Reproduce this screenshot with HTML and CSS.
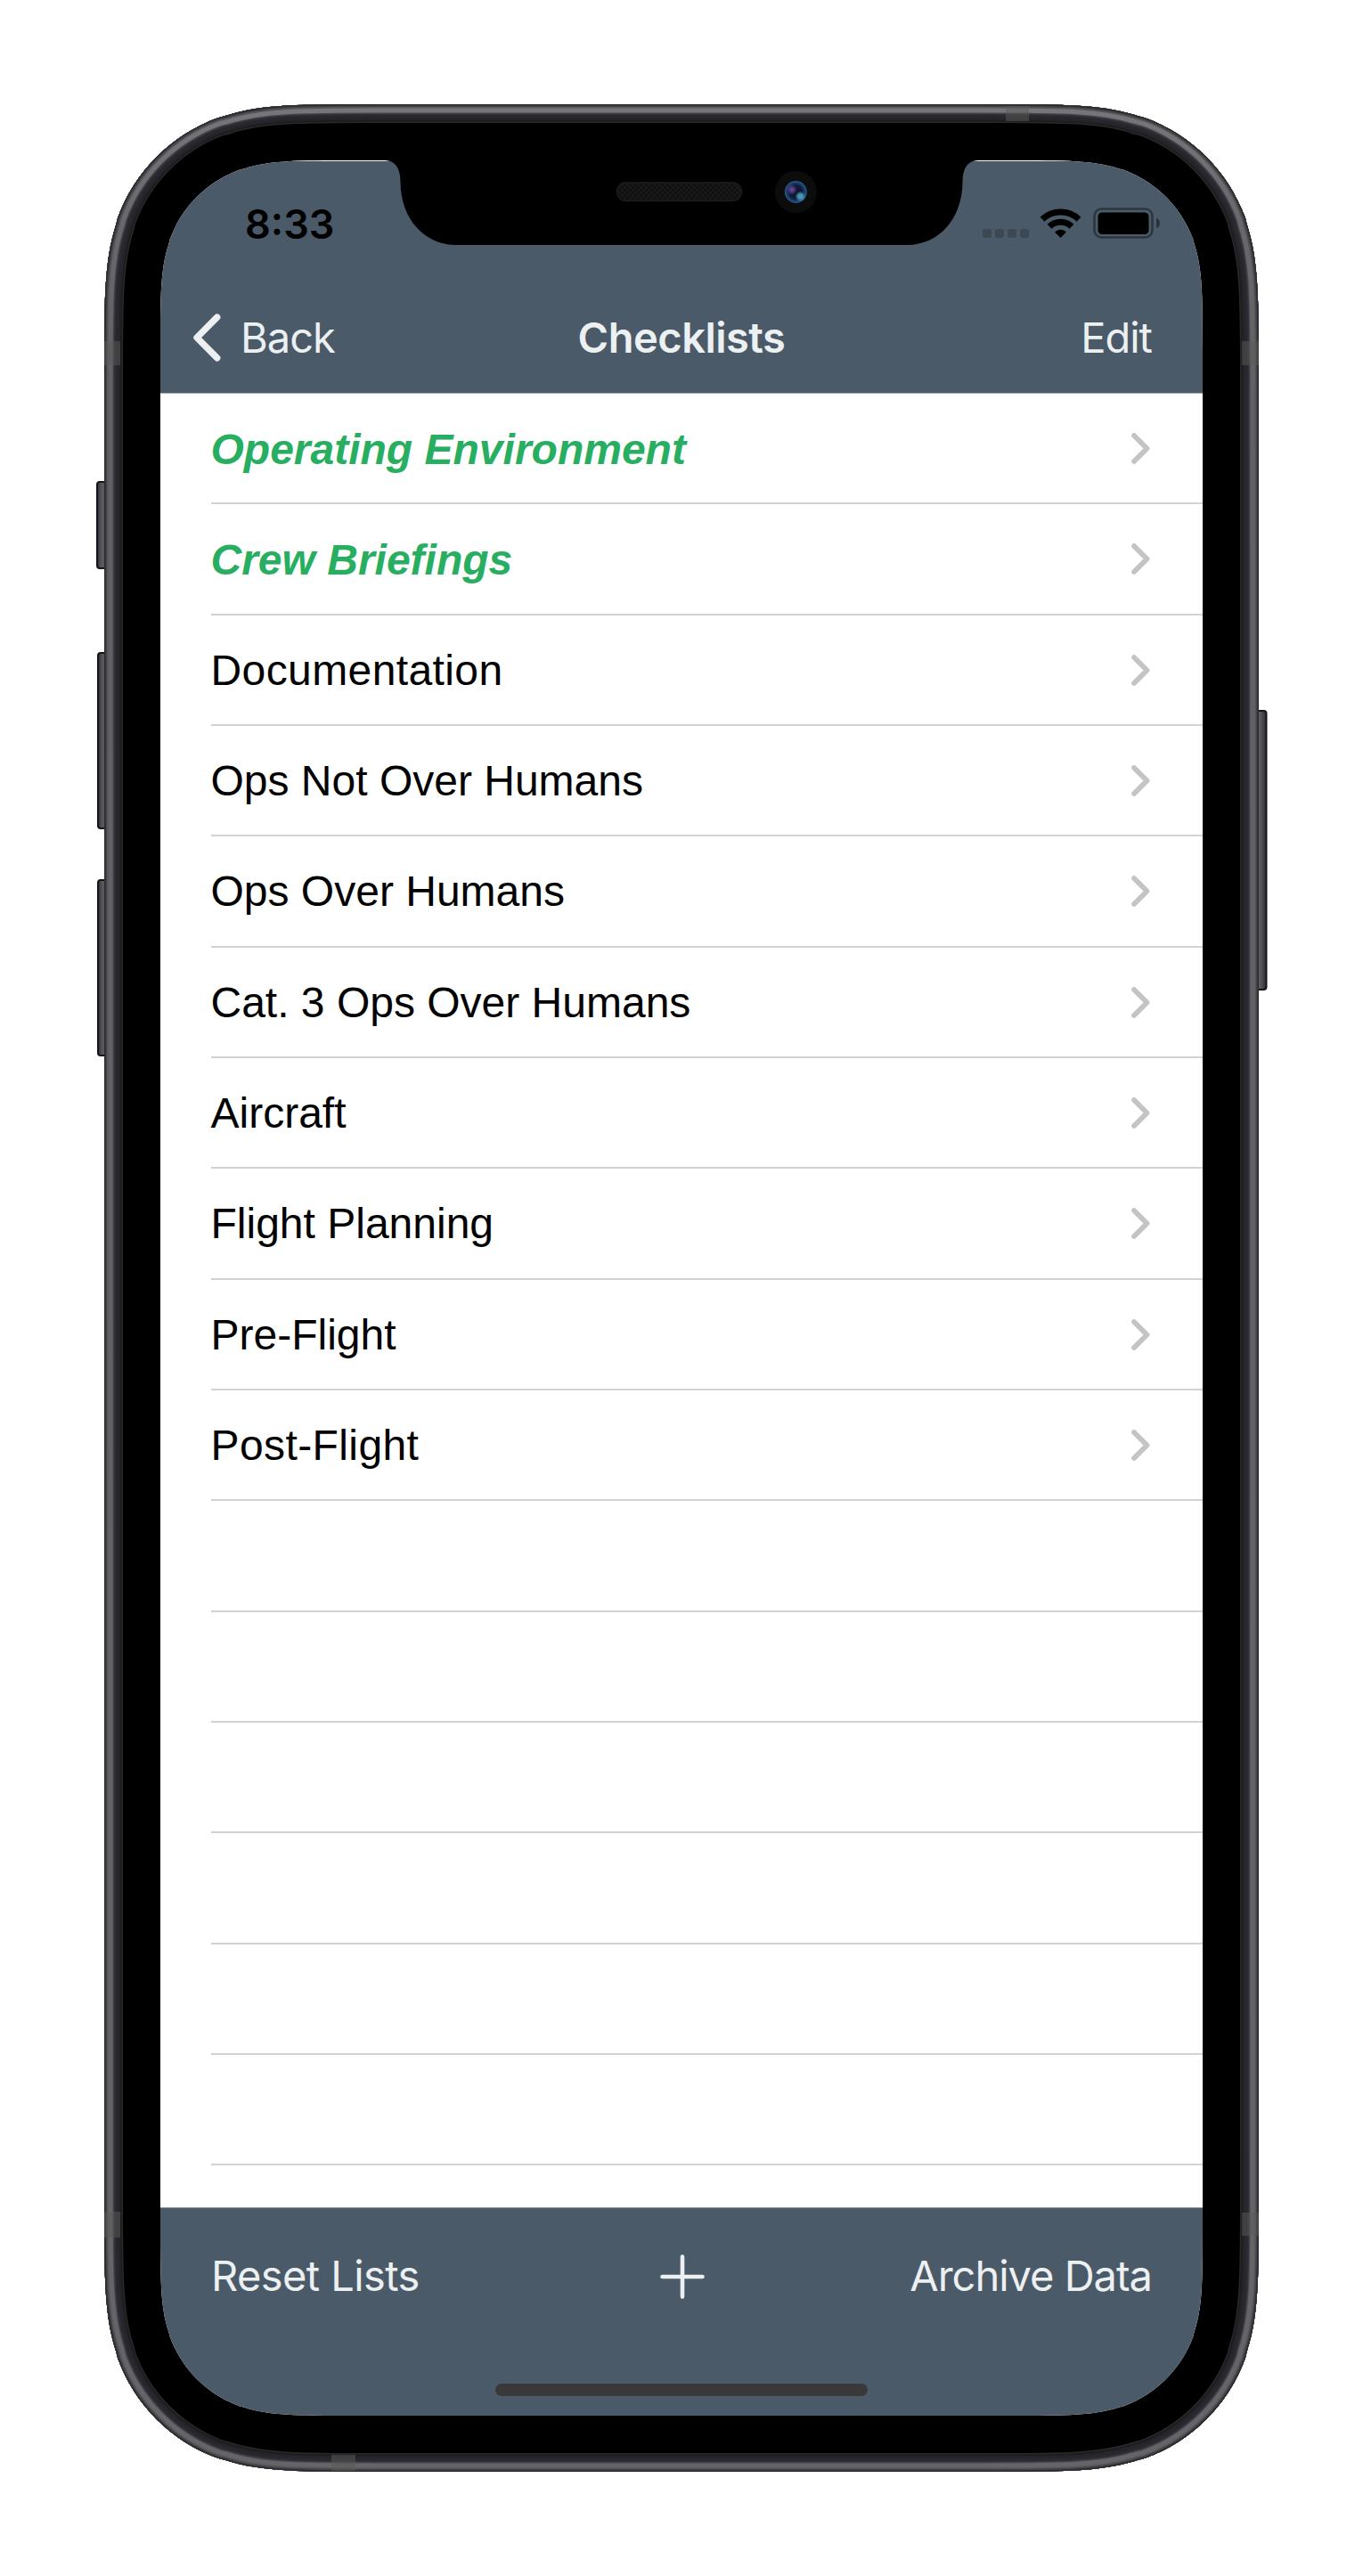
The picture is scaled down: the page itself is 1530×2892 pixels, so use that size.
FILE: index.html
```html
<!DOCTYPE html>
<html lang="en">
<head>
<meta charset="utf-8">
<title>Checklists</title>
<link rel="stylesheet" href="styles.css">
</head>
<body>
<main class="phone">
  <svg class="chassis" viewBox="0 0 1318 2658" aria-hidden="true">
    <defs>
      <linearGradient id="key" x1="0" x2="1" y1="0" y2="0">
        <stop offset="0" stop-color="#26262b"/><stop offset=".25" stop-color="#505056"/>
        <stop offset=".5" stop-color="#5c5c62"/><stop offset="1" stop-color="#2b2b31"/>
      </linearGradient>
      <linearGradient id="shine" x1="0" x2="0" y1="0" y2="1">
        <stop offset="0" stop-color="#77767b"/><stop offset=".05" stop-color="#69686d"/>
        <stop offset=".12" stop-color="#606065"/><stop offset="1" stop-color="#656469"/>
      </linearGradient>
      <path id="body"/>
      <clipPath id="bodyClip"><use href="#body"/></clipPath>
    </defs>
    <g fill="url(#key)" stroke="#15151b" stroke-width="2">
      <rect x="2" y="424" width="14" height="97" rx="3"/>
      <rect x="3" y="616" width="14" height="197" rx="3"/>
      <rect x="3" y="871" width="14" height="197" rx="3"/>
      <rect x="1300" y="681" width="14.500" height="313" rx="3"/>
    </g>
    <g id="rings" clip-path="url(#bodyClip)"></g>
    <g class="bands">
      <rect x="10" y="266" width="18" height="27"/>
      <rect x="1287" y="266" width="19" height="27"/>
      <rect x="10" y="2366" width="18" height="29"/>
      <rect x="1287" y="2367" width="19" height="26"/>
      <rect x="1022" y="2" width="26" height="17"/>
      <rect x="265" y="2639" width="27" height="18"/>
    </g>
  </svg>
  <section class="screen" id="screen">
    <header class="top">
      <div class="status">
        <span class="time">8:33</span>
        <div class="indicators">
          <div class="dots"><i></i><i></i><i></i><i></i></div>
          <svg class="wifi" viewBox="0 0 46 34">
            <g fill="none" stroke="#000" stroke-width="7">
              <path d="M2 13.200A29.700 29.700 0 0 1 43 13.200"/>
              <path d="M10 21.300A18 18 0 0 1 35 21.300"/>
            </g>
            <path d="M22.500 34L16 27.500A9.300 9.300 0 0 1 29 27.500Z"/>
          </svg>
          <svg class="battery" viewBox="0 0 76 36">
            <rect x="1.500" y="1.500" width="65" height="32" rx="8" fill="none" stroke="#000" stroke-opacity=".4" stroke-width="2.600"/>
            <rect x="5.500" y="5.500" width="57" height="24.500" rx="4.500"/>
            <path d="M71 11.500Q75 13.500 75 17.500T71 23.500Z" fill-opacity=".45"/>
          </svg>
        </div>
      </div>
      <nav class="nav">
        <a class="back"><svg viewBox="0 0 32 54"><path d="M27.700 4.200L5 27L27.700 49.800"/></svg><span>Back</span></a>
        <h1>Checklists</h1>
        <a class="edit">Edit</a>
      </nav>
    </header>
    <ul class="list" id="list">
      <li class="done"><span>Operating Environment</span></li>
      <li class="done"><span>Crew Briefings</span></li>
      <li class="wide"><span>Documentation</span></li>
      <li><span>Ops Not Over Humans</span></li>
      <li><span>Ops Over Humans</span></li>
      <li><span>Cat. 3 Ops Over Humans</span></li>
      <li><span>Aircraft</span></li>
      <li><span>Flight Planning</span></li>
      <li><span>Pre-Flight</span></li>
      <li class="wide"><span>Post-Flight</span></li>
      <li></li><li></li><li></li><li></li><li></li><li></li>
    </ul>
    <footer class="toolbar">
      <div class="actions">
        <a class="reset">Reset Lists</a>
        <svg class="plus" viewBox="0 0 50 50"><path d="M25 2.500V47.500M2.500 25H47.500"/></svg>
        <a class="archive">Archive Data</a>
      </div>
      <div class="home"></div>
    </footer>
  </section>
  <svg class="notch" viewBox="0 0 670 96" aria-hidden="true">
    <defs>
      <pattern id="mesh" width="6" height="6" patternUnits="userSpaceOnUse">
        <rect width="6" height="6" fill="#101010"/><path d="M0 0h3v3h-3zM3 3h3v3h-3z" fill="#191919"/>
      </pattern>
      <radialGradient id="lens">
        <stop offset="0" stop-color="#0b1024"/><stop offset=".6" stop-color="#101c3b"/><stop offset="1" stop-color="#255b8e"/>
      </radialGradient>
      <radialGradient id="violet"><stop offset="0" stop-color="#7650ad"/><stop offset="1" stop-color="#7650ad" stop-opacity="0"/></radialGradient>
      <radialGradient id="cyan"><stop offset="0" stop-color="#4796b8"/><stop offset=".4" stop-color="#4796b8"/><stop offset="1" stop-color="#4796b8" stop-opacity="0"/></radialGradient>
    </defs>
    <path d="M2 0H668V1C657 1 650.500 9 650.500 25C650.500 65 625 96 588 96H82C45 96 19.500 65 19.500 25C19.500 9 13 1 2 1Z"/>
    <rect x="262.500" y="26" width="140" height="20.500" rx="10.250" fill="url(#mesh)" stroke="#1c1c1c" stroke-width="1.500"/>
    <circle cx="463.300" cy="36.500" r="23.500" fill="#0c0c0c"/>
    <circle cx="463.300" cy="36.500" r="12.500" fill="url(#lens)"/>
    <circle cx="459" cy="34" r="6" fill="url(#violet)"/>
    <circle cx="468.500" cy="41.500" r="6" fill="url(#cyan)"/>
  </svg>
</main>
<script src="phone.js"></script>
</body>
</html>
```
FILE: styles.css
```css
* { box-sizing: border-box; margin: 0; padding: 0; }
body { background: #fff; font-family: Inter, "Liberation Sans", sans-serif; }
.phone { position: relative; width: 1530px; height: 2892px; padding: 180px; }
.chassis { position: absolute; left: 107px; top: 117px; width: 1318px; height: 2658px; }
.bands { fill: #5a5a58; fill-opacity: .5; }
.screen { position: relative; width: 1170px; height: 2532px; display: flex; flex-direction: column; background: #fff; }
.top { height: 262px; background: #4b5a69; border-top: 1px solid #fff; border-bottom: 1px solid #a9aeb4; }
.status { height: 131px; display: flex; justify-content: space-between; align-items: flex-start; padding: 0 47px 0 95px; }
.time { font-size: 45px; font-weight: 600; line-height: 54px; padding-top: 44px; color: #000; }
.indicators { display: flex; align-items: flex-start; padding-top: 52px; }
.dots { display: flex; gap: 4px; padding-top: 24px; }
.dots i { width: 10px; height: 10px; border-radius: 3px; background: #3d4853; }
.wifi { width: 46px; height: 34px; margin: 0 13px; }
.battery { width: 76px; height: 36px; }
.nav { height: 129px; display: grid; grid-template-columns: 1fr auto 1fr; align-items: center; padding: 5px 57px 0; color: #ecf0f1; font-size: 47px; letter-spacing: -1px; }
.back { display: flex; align-items: center; gap: 22px; margin-left: -21px; }
.back svg { width: 32px; height: 54px; fill: none; stroke: #ecf0f1; stroke-width: 7.400; stroke-linecap: round; stroke-linejoin: round; }
.back span, .nav h1, .edit { padding-bottom: 2px; }
.nav h1 { font-size: 47px; font-weight: 600; letter-spacing: -.5px; }
.edit { text-align: right; }
.list { flex: 1; overflow: hidden; list-style: none; padding-left: 56.500px; font-family: "Liberation Sans", Arial, sans-serif; font-size: 48px; color: #000; }
.list li { height: 124.340px; border-bottom: 2px solid #d2d2d4; display: flex; align-items: center; justify-content: space-between; padding: 1px 59px 0 0; }
.list .done span { padding-top: 2px; }
.list .done { color: #27ae60; font-weight: bold; font-style: italic; }
.list .wide { letter-spacing: .4px; }
.chev { width: 21px; height: 35px; fill: none; stroke: #c4c4c6; stroke-width: 5.800; stroke-linecap: round; stroke-linejoin: round; }
.toolbar { height: 234px; background: #4b5a69; border-top: 1px solid #939ba1; color: #ecf0f1; font-size: 47px; letter-spacing: -1px; }
.actions { height: 154px; display: grid; grid-template-columns: 1fr 50px 1fr; align-items: center; padding: 0 57px; }
.actions a { padding-bottom: 3px; }
.plus { width: 50px; height: 50px; margin-left: .5px; fill: none; stroke: #ecf0f1; stroke-width: 4.600; stroke-linecap: round; }
.reset { letter-spacing: -.6px; }
.archive { text-align: right; }
.home { width: 418px; height: 14px; margin: 43px auto 0; border-radius: 7px; background: #393939; }
.notch { position: absolute; left: 430px; top: 179px; width: 670px; height: 96px; }
```
FILE: phone.js
```js
// Continuous-curvature rounded rectangle: the same corner is mirrored into all four places
function squircle(x, y, w, h, r) {
  const R = x + w, B = y + h;
  const corner = [[1.52866, 0], [1.08849, 0], [0.86841, 0], [0.66993, 0.0655], [0.63149, 0.07491],
    [0.37282, 0.16906], [0.16906, 0.37282], [0.07491, 0.63149], [0.0655, 0.66993],
    [0, 0.86841], [0, 1.08849], [0, 1.52866]];
  const place = (right, bottom, reverse) => {
    const p = corner.map(([u, v]) => `${right ? R - u * r : x + u * r} ${bottom ? B - v * r : y + v * r}`);
    if (reverse) p.reverse();
    return `${p[0]}C${p[1]} ${p[2]} ${p[3]}L${p[4]}C${p[5]} ${p[6]} ${p[7]}L${p[8]}C${p[9]} ${p[10]} ${p[11]}`;
  };
  return `M${place(true, false, false)}L${place(true, true, true)}L${place(false, true, false)}L${place(false, false, true)}Z`;
}

document.getElementById('body').setAttribute('d', squircle(10, 0, 1296, 2658, 202));
document.getElementById('screen').style.clipPath = `path("${squircle(0, 0, 1170, 2532, 141)}")`;

// Metal rim: nested strokes, [depth from the outer edge, colour]
const rim = [[21, '#292928'], [19.5, '#1c1c1e'], [18, '#24232a'], [16, '#28272e'], [13, '#2d2c33'],
  [11.5, '#37363c'], [10.5, '#4a494f'], [9.5, 'url(#shine)'], [4.5, '#57565b'], [3, '#434247'], [1.5, '#2c2c2e']];
const use = (attrs) => `<use href="#body" ${attrs}/>`;
document.getElementById('rings').innerHTML = use('fill="#000"') +
  rim.map(([d, c]) => use(`fill="none" stroke="${c}" stroke-width="${d * 2}"`)).join('');

document.querySelectorAll('#list li span').forEach((s) => {
  s.insertAdjacentHTML('afterend', '<svg class="chev" viewBox="0 0 21 35"><path d="M3 3L17.500 17.500L3 32"/></svg>');
});
```
